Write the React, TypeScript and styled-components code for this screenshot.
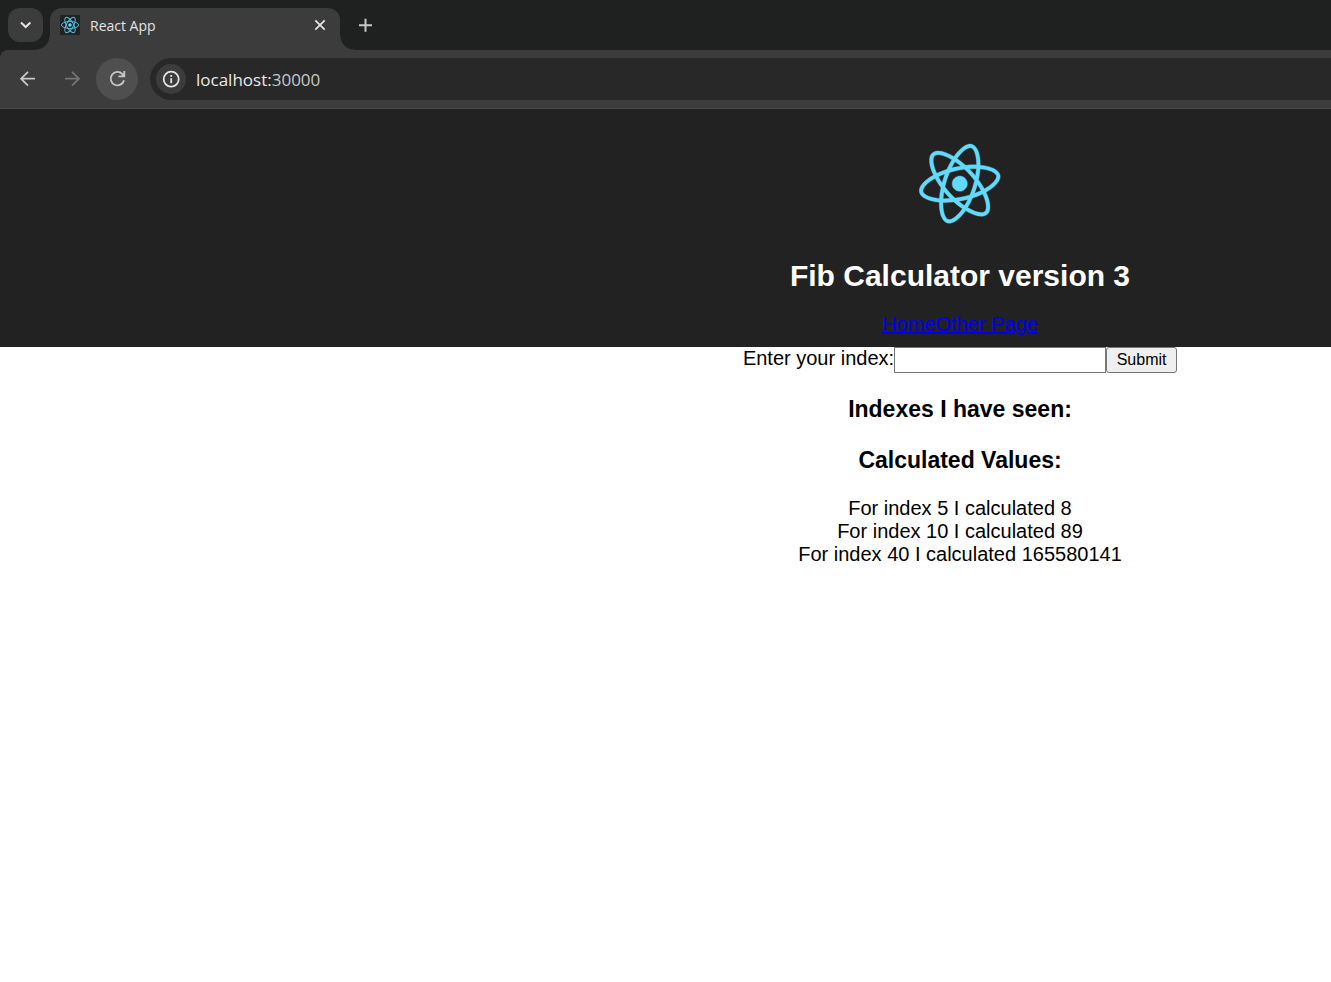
import React from 'react';
import styled, { createGlobalStyle } from 'styled-components';

const GlobalStyle = createGlobalStyle`
  * { box-sizing: border-box; }
  body {
    margin: 0;
    background: #ffffff;
    font-family: 'Liberation Sans', Arial, sans-serif;
    font-size: 20px;
    line-height: 23px;
    color: #000000;
  }
  button, input { font-family: inherit; }
`;

const TabStrip = styled.div`
  display: flex;
  align-items: flex-end;
  height: 50px;
  padding-left: 8px;
  background: #1f2120;
`;

const ChromeButton = styled.button<{ $size: number; $fill?: string; $color?: string }>`
  display: flex;
  flex: none;
  align-items: center;
  justify-content: center;
  width: ${(p) => p.$size}px;
  height: ${(p) => p.$size}px;
  padding: 0;
  border: 0;
  border-radius: 50%;
  background: ${(p) => p.$fill ?? 'transparent'};
  color: ${(p) => p.$color ?? '#c7c7c7'};
`;

const TabSearchButton = styled(ChromeButton)`
  align-self: flex-start;
  height: 34px;
  margin-top: 8px;
  border-radius: 12px;
`;

const Tab = styled.div`
  position: relative;
  display: flex;
  align-items: center;
  gap: 10px;
  width: 290px;
  height: 42px;
  margin-left: 7px;
  padding: 0 12px 8px 10px;
  border-radius: 12px 12px 0 0;
  background: #3c3c3c;

  &::before,
  &::after {
    content: '';
    position: absolute;
    bottom: 0;
    width: 14px;
    height: 14px;
  }
  &::before {
    right: 100%;
    background: radial-gradient(circle at 0 0, transparent 13px, #3c3c3c 14px);
  }
  &::after {
    left: 100%;
    background: radial-gradient(circle at 100% 0, transparent 13px, #3c3c3c 14px);
  }
`;

const TabTitle = styled.span`
  flex: 1;
  font-family: 'Open Sans', sans-serif;
  font-size: 14px;
  color: #e3e3e3;
`;

const NewTabButton = styled(ChromeButton)`
  margin: 0 0 11px 11px;
`;

const ToolbarBack = styled.div`
  background: #1f2120;
`;

const Toolbar = styled.div`
  display: flex;
  align-items: center;
  gap: 3px;
  height: 59px;
  padding-left: 6px;
  border-bottom: 1px solid #4a4a4a;
  border-top-left-radius: 8px;
  background: #3c3c3c;
`;

const AddressBar = styled.div`
  display: flex;
  flex: 1;
  align-items: center;
  gap: 10px;
  height: 42px;
  margin-left: 9px;
  padding-left: 6px;
  border-radius: 21px 0 0 21px;
  background: #282828;
`;

const Address = styled.span`
  font-family: 'Open Sans', sans-serif;
  font-size: 17px;
  color: #e8e8e8;
`;

const Port = styled.span`
  color: #c7c7c7;
`;

const PageColumns = styled.div`
  display: grid;
  grid-template-columns: 589fr 742fr;
`;

const Centered = styled.div`
  grid-column: 2;
  display: flex;
  flex-direction: column;
  align-items: center;
`;

const Header = styled.header`
  padding: 25px 0 11px;
  background: #222222;
`;

const Title = styled.h1`
  margin: 25px 0 20px;
  font-size: 30px;
  line-height: 34px;
  color: #ffffff;
`;

const PageLink = styled.a`
  color: #0000ee;
  text-decoration: underline;
`;

const IndexForm = styled.form`
  display: flex;
  height: 26px;
`;

const IndexInput = styled.input`
  width: 212px;
  height: 26px;
  padding: 1px 2px;
  border: 1px solid #767676;
  background: #ffffff;
  font-size: 16px;
`;

const SubmitButton = styled.button`
  width: 71px;
  height: 26px;
  padding: 0;
  border: 1px solid #767676;
  border-radius: 3px;
  background: #efefef;
  color: #000000;
  font-size: 16px;
`;

const SectionTitle = styled.h3`
  margin: 22px 0 0;
  font-size: 23px;
  line-height: 29px;
`;

const Results = styled.div`
  margin-top: 22px;
  text-align: center;
`;

const ORBITS =
  'M666.3 296.5c0-32.5-40.7-63.3-103.1-82.4 14.4-63.6 8-114.2-20.2-130.4-6.5-3.8-14.1-5.6-22.4-5.6v22.3c4.6 0 8.3.9 11.4 2.6 13.6 7.8 19.5 37.5 14.9 75.7-1.1 9.4-2.9 19.3-5.1 29.4-19.6-4.8-41-8.5-63.5-10.9-13.5-18.5-27.5-35.3-41.6-50 32.6-30.3 63.2-46.9 84-46.9V78c-27.5 0-63.5 19.6-99.9 53.6-36.4-33.8-72.4-53.2-99.9-53.2v22.3c20.7 0 51.4 16.5 84 46.6-14 14.7-28 31.4-41.3 49.9-22.6 2.4-44 6.1-63.6 11-2.3-10-4-19.7-5.2-29-4.7-38.2 1.1-67.9 14.6-75.8 3-1.8 6.9-2.6 11.5-2.6V78.5c-8.4 0-16 1.8-22.6 5.6-28.1 16.2-34.4 66.7-19.9 130.1-62.2 19.2-102.7 49.9-102.7 82.3 0 32.5 40.7 63.3 103.1 82.4-14.4 63.6-8 114.2 20.2 130.4 6.5 3.8 14.1 5.6 22.5 5.6 27.5 0 63.5-19.6 99.9-53.6 36.4 33.8 72.4 53.2 99.9 53.2 8.4 0 16-1.8 22.6-5.6 28.1-16.2 34.4-66.7 19.9-130.1 62-19.1 102.5-49.9 102.5-82.3zm-130.2-66.7c-3.7 12.9-8.3 26.2-13.5 39.5-4.1-8-8.4-16-13.1-24-4.6-8-9.5-15.8-14.4-23.4 14.2 2.1 27.9 4.7 41 7.9zm-45.8 106.5c-7.8 13.5-15.8 26.3-24.1 38.2-14.9 1.3-30 2-45.2 2-15.1 0-30.2-.7-45-1.9-8.3-11.9-16.4-24.6-24.2-38-7.6-13.1-14.5-26.4-20.8-39.8 6.2-13.4 13.2-26.8 20.7-39.9 7.8-13.5 15.8-26.3 24.1-38.2 14.9-1.3 30-2 45.2-2 15.1 0 30.2.7 45 1.9 8.3 11.9 16.4 24.6 24.2 38 7.6 13.1 14.5 26.4 20.8 39.8-6.3 13.4-13.2 26.8-20.7 39.9zm32.3-13c5.4 13.4 10 26.8 13.8 39.8-13.1 3.2-26.9 5.9-41.2 8 4.9-7.7 9.8-15.6 14.4-23.7 4.6-8 8.9-16.1 13-24.1zM421.2 430c-9.3-9.6-18.6-20.3-27.8-32 9 .4 18.2.7 27.5.7 9.4 0 18.7-.2 27.8-.7-9 11.7-18.3 22.4-27.5 32zm-74.4-58.9c-14.2-2.1-27.9-4.7-41-7.9 3.7-12.9 8.3-26.2 13.5-39.5 4.1 8 8.4 16 13.1 24 4.7 8 9.5 15.8 14.4 23.4zM420.7 163c9.3 9.6 18.6 20.3 27.8 32-9-.4-18.2-.7-27.5-.7-9.4 0-18.7.2-27.8.7 9-11.7 18.3-22.4 27.5-32zm-74 58.9c-4.9 7.7-9.8 15.6-14.4 23.7-4.6 8-8.9 16-13 24-5.4-13.4-10-26.8-13.8-39.8 13.1-3.1 26.9-5.8 41.2-7.9zm-90.5 125.2c-35.4-15.1-58.3-34.9-58.3-50.6 0-15.7 22.9-35.6 58.3-50.6 8.6-3.7 18-7 27.7-10.1 5.7 19.6 13.2 40 22.5 60.9-9.2 20.8-16.6 41.1-22.2 60.6-9.9-3.1-19.3-6.5-28-10.2zM310 490c-13.6-7.8-19.5-37.5-14.9-75.7 1.1-9.4 2.9-19.3 5.1-29.4 19.6 4.8 41 8.5 63.5 10.9 13.5 18.5 27.5 35.3 41.6 50-32.6 30.3-63.2 46.9-84 46.9-4.5-.1-8.3-1-11.3-2.7zm237.2-76.2c4.7 38.2-1.1 67.9-14.6 75.8-3 1.8-6.9 2.6-11.5 2.6-20.7 0-51.4-16.5-84-46.6 14-14.7 28-31.4 41.3-49.9 22.6-2.4 44-6.1 63.6-11 2.3 10.1 4.1 19.8 5.2 29.1zm38.5-66.7c-8.6 3.7-18 7-27.7 10.1-5.7-19.6-13.2-40-22.5-60.9 9.2-20.8 16.6-41.1 22.2-60.6 9.9 3.1 19.3 6.5 28.1 10.2 35.4 15.1 58.3 34.9 58.3 50.6-.1 15.7-23 35.6-58.4 50.6z';

function ReactLogo() {
  return (
    <svg width="100" height="100" viewBox="125 1 595 595" fill="#61dafb" aria-hidden="true">
      <g transform="rotate(-12 420.9 296.5)" stroke="#61dafb" strokeWidth="2">
        <path d={ORBITS} />
        <circle cx="420.9" cy="296.5" r="45.7" />
      </g>
    </svg>
  );
}

function Favicon() {
  return (
    <svg width="20" height="20" viewBox="-10 -10 20 20" aria-hidden="true">
      <rect x="-10" y="-10" width="20" height="20" rx="1" fill="#222222" />
      <g fill="none" stroke="#53b9d4" strokeWidth="1">
        <ellipse rx="8.6" ry="3.5" />
        <ellipse rx="8.6" ry="3.5" transform="rotate(60)" />
        <ellipse rx="8.6" ry="3.5" transform="rotate(120)" />
      </g>
      <circle r="1.7" fill="#61dafb" />
    </svg>
  );
}

function Glyph({ size, d, width = 2 }: { size: number; d: string; width?: number }) {
  return (
    <svg width={size} height={size} viewBox={`0 0 ${size} ${size}`} fill="none" stroke="currentColor" strokeWidth={width} aria-hidden="true">
      <path d={d} />
    </svg>
  );
}

const results = [
  { index: 5, value: 8 },
  { index: 10, value: 89 },
  { index: 40, value: 165580141 },
];

export default function App() {
  return (
    <>
      <GlobalStyle />
      <TabStrip>
        <TabSearchButton $size={35} $fill="#3c3c3c" $color="#e3e3e3" aria-label="Search tabs">
          <Glyph size={20} d="M5 7.5 9.7 12l4.7-4.5" />
        </TabSearchButton>
        <Tab>
          <Favicon />
          <TabTitle>React App</TabTitle>
          <ChromeButton $size={16} $color="#e3e3e3" aria-label="Close tab">
            <Glyph size={16} width={1.8} d="M3.3 3.3l9.4 9.4M12.7 3.3l-9.4 9.4" />
          </ChromeButton>
        </Tab>
        <NewTabButton $size={28} aria-label="New tab">
          <Glyph size={20} d="M10.5 3.7v13M4 10.2h13" />
        </NewTabButton>
      </TabStrip>
      <ToolbarBack>
        <Toolbar>
          <ChromeButton $size={42} aria-label="Back">
            <Glyph size={20} width={1.8} d="M18 9.7H4.2M11 2.8 4.1 9.7l6.9 6.9" />
          </ChromeButton>
          <ChromeButton $size={42} $color="#757575" aria-label="Forward">
            <Glyph size={20} width={1.8} d="M3 9.7h13.5M10 2.8l6.9 6.9-6.9 6.9" />
          </ChromeButton>
          <ChromeButton $size={42} $fill="#4f4f4f" aria-label="Reload">
            <Glyph size={20} width={1.8} d="M17 11.2A6.7 6.7 0 1 1 15.3 5L17 6.8M17.3 2v5.3h-5.8" />
          </ChromeButton>
          <AddressBar>
            <ChromeButton $size={30} $fill="#3c3c3c" $color="#e3e3e3" aria-label="Site information">
              <svg width="20" height="20" viewBox="0 0 20 20" fill="none" stroke="currentColor" strokeWidth="1.8" aria-hidden="true">
                <circle cx="10.2" cy="10.2" r="7.5" />
                <path d="M10.2 9.2v5M10.2 6v1.8" />
              </svg>
            </ChromeButton>
            <Address>
              localhost:<Port>30000</Port>
            </Address>
          </AddressBar>
        </Toolbar>
      </ToolbarBack>
      <Header>
        <PageColumns>
          <Centered>
            <ReactLogo />
            <Title>Fib Calculator version 3</Title>
            <nav>
              <PageLink href="#home">Home</PageLink>
              <PageLink href="#other">Other Page</PageLink>
            </nav>
          </Centered>
        </PageColumns>
      </Header>
      <PageColumns as="main">
        <Centered>
          <IndexForm onSubmit={(e: React.FormEvent) => e.preventDefault()}>
            <label htmlFor="index">Enter your index:</label>
            <IndexInput id="index" type="text" />
            <SubmitButton type="submit">Submit</SubmitButton>
          </IndexForm>
          <SectionTitle>Indexes I have seen:</SectionTitle>
          <SectionTitle>Calculated Values:</SectionTitle>
          <Results>
            {results.map((r) => (
              <div key={r.index}>{`For index ${r.index} I calculated ${r.value}`}</div>
            ))}
          </Results>
        </Centered>
      </PageColumns>
    </>
  );
}
